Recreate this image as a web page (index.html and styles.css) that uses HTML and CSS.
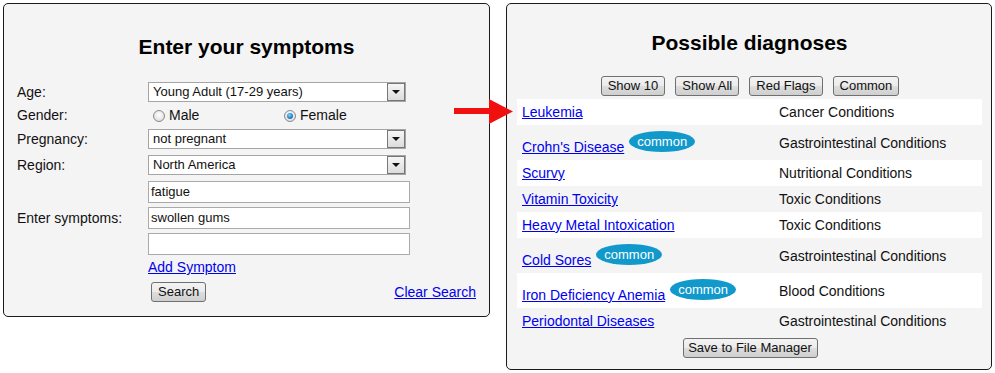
FILE: index.html
```html
<!DOCTYPE html>
<html lang="en">
<head>
<meta charset="utf-8">
<title>Symptom checker</title>
<link rel="stylesheet" href="styles.css">
</head>
<body>
<div class="page">
  <section class="panel panel-left">
    <h2 class="panel-title">Enter your symptoms</h2>
    <div class="form">
      <div class="label">Age:</div>
      <div class="ctrl"><div class="select"><span class="select-text">Young Adult (17-29 years)</span><span class="select-btn"><i class="tri"></i></span></div></div>

      <div class="label">Gender:</div>
      <div class="ctrl gender">
        <label class="radio-opt"><span class="radio"></span>Male</label>
        <label class="radio-opt"><span class="radio checked"></span>Female</label>
      </div>

      <div class="label">Pregnancy:</div>
      <div class="ctrl"><div class="select"><span class="select-text">not pregnant</span><span class="select-btn"><i class="tri"></i></span></div></div>

      <div class="label">Region:</div>
      <div class="ctrl"><div class="select"><span class="select-text">North America</span><span class="select-btn"><i class="tri"></i></span></div></div>

      <div class="label">Enter symptoms:</div>
      <div class="ctrl inputs">
        <div class="input">fatigue</div>
        <div class="input">swollen gums</div>
        <div class="input"></div>
      </div>

      <div class="label"></div>
      <div class="ctrl add-row"><a href="#" class="link">Add Symptom</a></div>

      <div class="label"></div>
      <div class="ctrl search-row">
        <button class="btn btn-search">Search</button>
        <a href="#" class="link">Clear Search</a>
      </div>
    </div>
  </section>

  <section class="panel panel-right">
    <h2 class="panel-title title-right">Possible diagnoses</h2>
    <div class="btn-row">
      <button class="btn">Show 10</button>
      <button class="btn">Show All</button>
      <button class="btn">Red Flags</button>
      <button class="btn">Common</button>
    </div>
    <table class="results">
      <tr class="row"><td class="c1"><a href="#" class="link">Leukemia</a></td><td class="c2">Cancer Conditions</td></tr>
      <tr class="row tall"><td class="c1"><a href="#" class="link">Crohn's Disease</a><span class="badge">common</span></td><td class="c2">Gastrointestinal Conditions</td></tr>
      <tr class="row"><td class="c1"><a href="#" class="link">Scurvy</a></td><td class="c2">Nutritional Conditions</td></tr>
      <tr class="row"><td class="c1"><a href="#" class="link">Vitamin Toxicity</a></td><td class="c2">Toxic Conditions</td></tr>
      <tr class="row"><td class="c1"><a href="#" class="link">Heavy Metal Intoxication</a></td><td class="c2">Toxic Conditions</td></tr>
      <tr class="row tall"><td class="c1"><a href="#" class="link">Cold Sores</a><span class="badge">common</span></td><td class="c2">Gastrointestinal Conditions</td></tr>
      <tr class="row tall"><td class="c1"><a href="#" class="link">Iron Deficiency Anemia</a><span class="badge">common</span></td><td class="c2">Blood Conditions</td></tr>
      <tr class="row"><td class="c1"><a href="#" class="link">Periodontal Diseases</a></td><td class="c2">Gastrointestinal Conditions</td></tr>
    </table>
    <div class="save-row"><button class="btn btn-save">Save to File Manager</button></div>
  </section>

  <svg class="arrow" width="60" height="27" viewBox="0 0 60 27" aria-hidden="true">
    <polygon points="0,9 35,9 35,0 59,12.5 35,25 35,15 0,15" fill="#f01010"/>
  </svg>
</div>
</body>
</html>
```

FILE: styles.css
```css
* { box-sizing: border-box; }

html, body {
  margin: 0;
  padding: 0;
  background: #ffffff;
}

body {
  font-family: "Liberation Sans", Arial, sans-serif;
  font-size: 14px;
  color: #111;
}

.page {
  position: relative;
  display: flex;
  align-items: flex-start;
  gap: 16px;
  padding: 3px;
}

.panel {
  background: #f4f4f4;
  border: 1px solid #1a1a1a;
  border-radius: 5px;
}

.panel-left {
  width: 487px;
  padding: 0 13px 14px;
}

.panel-right {
  width: 486px;
  padding: 0 9px 11px 10px;
}

.panel-title {
  margin: 31px 0 0;
  font-size: 21px;
  line-height: 24px;
  font-weight: bold;
  text-align: center;
  color: #000;
}

.title-right {
  margin-top: 27px;
}

/* ---- form ---- */
.form {
  margin-top: 23px;
  display: grid;
  grid-template-columns: 131px 1fr;
  row-gap: 6px;
  align-items: center;
}

.label {
  line-height: 15px;
  color: #111;
}

.ctrl {
  font-size: 13px;
}

.select {
  width: 258px;
  height: 20px;
  border: 1px solid #a5a5a5;
  background: #fff;
  display: flex;
  align-items: stretch;
}

.select-text {
  flex: 1;
  padding-left: 4px;
  line-height: 18px;
  color: #111;
  white-space: nowrap;
  overflow: hidden;
}

.select-btn {
  width: 18px;
  margin: 0;
  border: 1px solid #777;
  background: linear-gradient(#f6f6f6, #dcdcdc);
  display: flex;
  align-items: center;
  justify-content: center;
}

.tri {
  display: block;
  width: 0;
  height: 0;
  border-left: 4px solid transparent;
  border-right: 4px solid transparent;
  border-top: 4px solid #111;
}

.gender {
  display: grid;
  grid-template-columns: 131px 1fr;
  height: 15px;
  font-size: 14px;
}

.radio-opt {
  display: flex;
  align-items: center;
  line-height: 15px;
  color: #111;
}

.radio {
  width: 12px;
  height: 12px;
  margin: 1px 4px 0 5px;
  border-radius: 50%;
  border: 1px solid #8a8a8a;
  background: radial-gradient(circle at 50% 40%, #ffffff 0%, #e2e2e2 70%, #cfcfcf 100%);
  display: flex;
  align-items: center;
  justify-content: center;
}

.radio.checked::after {
  content: "";
  width: 6px;
  height: 6px;
  border-radius: 50%;
  background: radial-gradient(circle at 40% 35%, #7fd0ff 0%, #1f7fc7 60%, #0d4f8a 100%);
}

.inputs {
  display: flex;
  flex-direction: column;
  gap: 4px;
}

.input {
  width: 262px;
  height: 22px;
  border: 1px solid #aaaaaa;
  background: #fff;
  padding-left: 2px;
  line-height: 20px;
  color: #111;
}

.add-row {
  margin-top: -2px;
  font-size: 14px;
  line-height: 17px;
}

.link {
  color: #0000ee;
  text-decoration: underline;
  font-size: 14px;
}

.search-row {
  display: flex;
  justify-content: space-between;
  align-items: center;
  height: 20px;
}

.btn {
  font-family: "Liberation Sans", Arial, sans-serif;
  font-size: 13px;
  height: 20px;
  padding: 0 6px;
  margin: 0;
  border: 1px solid #707070;
  border-radius: 3px;
  background: linear-gradient(#f3f3f3 0%, #ebebeb 50%, #dddddd 51%, #cfcfcf 100%);
  color: #111;
  line-height: 18px;
  white-space: nowrap;
}

.btn-search {
  margin-left: 3px;
  width: 55px;
}

/* ---- results ---- */
.btn-row {
  margin-top: 21px;
  display: flex;
  justify-content: center;
  gap: 10px;
  padding-left: 1px;
}

.btn-row .btn {
  min-width: 64px;
}

.results {
  margin-top: 3px;
  width: 465px;
  border-collapse: collapse;
}

.row td {
  padding: 0 5px;
  height: 26px;
  vertical-align: middle;
  line-height: 18px;
}

.row:nth-child(odd) td {
  background: #ffffff;
}

.row:nth-child(even) td {
  background: #f4f4f4;
}

.row.tall td {
  height: 35px;
}

.row.tall td.c1 {
  vertical-align: bottom;
  padding-bottom: 4px;
}

.c1 {
  width: 257px;
  white-space: nowrap;
}

.c2 {
  color: #111;
}

.badge {
  display: inline-block;
  margin-left: 5px;
  height: 21px;
  padding: 0 8px;
  border-radius: 50%;
  background: #1299cc;
  color: #fff;
  font-size: 13px;
  line-height: 21px;
  vertical-align: 6px;
}

.save-row {
  margin-top: 4px;
  display: flex;
  justify-content: center;
}

.btn-save {
  width: 135px;
  padding: 0;
  margin-left: 1px;
}

.arrow {
  position: absolute;
  left: 454px;
  top: 99px;
}
```
